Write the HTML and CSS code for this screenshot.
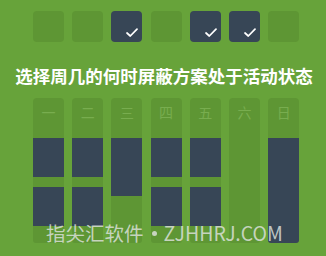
FILE: index.html
```html
<!DOCTYPE html>
<html lang="zh">
<head>
<meta charset="utf-8">
<link rel="stylesheet" href="styles.css">
</head>
<body>
<div class="page">
  <div class="days">
    <div class="day"></div>
    <div class="day"></div>
    <div class="day on"><svg class="check" viewBox="0 0 12 9"><path d="M1 5 L4.3 8 L11 1.2" fill="none" stroke="#fff" stroke-width="1.7" stroke-linecap="round" stroke-linejoin="round"/></svg></div>
    <div class="day"></div>
    <div class="day on"><svg class="check" viewBox="0 0 12 9"><path d="M1 5 L4.3 8 L11 1.2" fill="none" stroke="#fff" stroke-width="1.7" stroke-linecap="round" stroke-linejoin="round"/></svg></div>
    <div class="day on"><svg class="check" viewBox="0 0 12 9"><path d="M1 5 L4.3 8 L11 1.2" fill="none" stroke="#fff" stroke-width="1.7" stroke-linecap="round" stroke-linejoin="round"/></svg></div>
    <div class="day"></div>
  </div>
  <div class="title">选择周几的何时屏蔽方案处于活动状态</div>
  <div class="cols">
    <div class="col"><div class="lbl">一</div><div class="blk" style="height:39px"></div><div class="gap" style="height:10px"></div><div class="blk" style="height:39px"></div></div>
    <div class="col"><div class="lbl">二</div><div class="blk" style="height:39px"></div><div class="gap" style="height:10px"></div><div class="blk" style="height:39px"></div></div>
    <div class="col"><div class="lbl">三</div><div class="blk" style="height:58px"></div></div>
    <div class="col"><div class="lbl">四</div><div class="blk" style="height:39px"></div><div class="gap" style="height:10px"></div><div class="blk" style="height:39px"></div></div>
    <div class="col"><div class="lbl">五</div><div class="blk" style="height:39px"></div><div class="gap" style="height:10px"></div><div class="blk" style="height:39px"></div></div>
    <div class="col"><div class="lbl">六</div></div>
    <div class="col"><div class="lbl">日</div><div class="blk last" style="height:105px"></div></div>
  </div>
  <div class="wm">指尖汇软件<span class="dot"></span>ZJHHRJ.COM</div>
</div>
</body>
</html>
```

FILE: styles.css
```css
html, body {
  margin: 0;
  padding: 0;
  background: #67a33a;
}
.page {
  position: relative;
  width: 326px;
  height: 256px;
  overflow: hidden;
  font-family: "Noto Sans CJK SC", "Noto Sans", sans-serif;
}
.days {
  display: flex;
  gap: 8.2px;
  padding: 11px 0 0 33px;
}
.day {
  position: relative;
  width: 31px;
  height: 31px;
  border-radius: 4px;
  background: #5e9634;
}
.day.on {
  background: #374656;
}
.check {
  position: absolute;
  right: 4px;
  bottom: 5px;
  width: 12px;
  height: 9px;
}
.title {
  margin-top: 22px;
  text-align: center;
  color: #fff;
  font-weight: 700;
  font-size: 17.5px;
  line-height: 24px;
  padding-left: 2px;
}
.cols {
  display: flex;
  gap: 8.2px;
  padding-left: 33px;
  margin-top: 10px;
}
.col {
  width: 31px;
  height: 145px;
  border-radius: 4px 4px 3px 3px;
  background: #5e9634;
  display: flex;
  flex-direction: column;
  overflow: hidden;
}
.lbl {
  height: 40px;
  box-sizing: border-box;
  padding-top: 6px;
  text-align: center;
  font-size: 14px;
  line-height: 17px;
  color: #78ad4f;
}
.blk {
  background: #374656;
}
.wm {
  position: absolute;
  left: 46px;
  top: 220px;
  font-size: 19.5px;
  line-height: 26px;
  color: rgba(222, 226, 222, 0.82);
  white-space: nowrap;
}
.dot {
  display: inline-block;
  width: 5px;
  height: 5px;
  border-radius: 50%;
  background: rgba(222, 226, 222, 0.82);
  margin: 0 7px 0 8px;
  vertical-align: 5px;
}
```
